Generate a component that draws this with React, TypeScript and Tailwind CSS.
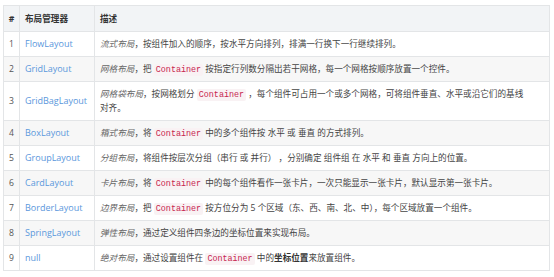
import React from "react";

const C = ({ children }: { children: React.ReactNode }) => (
  <code className="font-['Liberation_Mono',monospace] text-[8.4px] leading-[12px] text-[#c7254e] bg-[#f9f2f4] px-[2px] py-[1px] rounded-[2px]">
    {children}
  </code>
);

const E = ({ children }: { children: React.ReactNode }) => <em className="italic text-[#666]">{children}</em>;

const rows: { n: string; name: string; desc: React.ReactNode }[] = [
  { n: "1", name: "FlowLayout", desc: <><E>流式布局</E>，按组件加入的顺序，按水平方向排列，排满一行换下一行继续排列。</> },
  { n: "2", name: "GridLayout", desc: <><E>网格布局</E>，把 <C>Container</C> 按指定行列数分隔出若干网格，每一个网格按顺序放置一个控件。</> },
  { n: "3", name: "GridBagLayout", desc: <><E>网格袋布局</E>，按网格划分 <C>Container</C> ，每个组件可占用一个或多个网格，可将组件垂直、水平或沿它们的基线<br />对齐。</> },
  { n: "4", name: "BoxLayout", desc: <><E>箱式布局</E>，将 <C>Container</C> 中的多个组件按 水平 或 垂直 的方式排列。</> },
  { n: "5", name: "GroupLayout", desc: <><E>分组布局</E>，将组件按层次分组（串行 或 并行） ，分别确定 组件组 在 水平 和 垂直 方向上的位置。</> },
  { n: "6", name: "CardLayout", desc: <><E>卡片布局</E>，将 <C>Container</C> 中的每个组件看作一张卡片，一次只能显示一张卡片，默认显示第一张卡片。</> },
  { n: "7", name: "BorderLayout", desc: <><E>边界布局</E>，把 <C>Container</C> 按方位分为 5 个区域（东、西、南、北、中），每个区域放置一个组件。</> },
  { n: "8", name: "SpringLayout", desc: <><E>弹性布局</E>，通过定义组件四条边的坐标位置来实现布局。</> },
  { n: "9", name: "null", desc: <><E>绝对布局</E>，通过设置组件在 <C>Container</C> 中的<strong className="font-bold text-[#333]">坐标位置</strong>来放置组件。</> },
];

export default function App() {
  return (
    <div className="w-[554px] h-[277px] bg-white pt-[5px] pl-[3px] font-['Open_Sans','Noto_Sans_CJK_SC',sans-serif] text-[8.6px] leading-[14px] text-[#444]">
      <table className="w-[546px] border-collapse table-fixed">
        <colgroup>
          <col className="w-[16px]" />
          <col className="w-[75px]" />
          <col className="w-[455px]" />
        </colgroup>
        <thead>
          <tr className="bg-[#f2f4f6]">
            <th className="border border-[#e3e5e7] text-center font-bold text-[#333] py-0 px-0 h-[26px]">#</th>
            <th className="border border-[#e3e5e7] text-left font-bold text-[#333] py-0 px-[5px]">布局管理器</th>
            <th className="border border-[#e3e5e7] text-left font-bold text-[#333] py-0 px-[5px]">描述</th>
          </tr>
        </thead>
        <tbody>
          {rows.map((r, i) => (
            <tr key={r.n} className={i % 2 === 1 ? "bg-[#f7f7f7]" : "bg-white"}>
              <td className="border border-[#e3e5e7] text-center text-[#555] py-0 px-0 h-[25px]">{r.n}</td>
              <td className="border border-[#e3e5e7] px-[5px] py-0 text-[9px] text-[#5a97dc] whitespace-nowrap">{r.name}</td>
              <td className="border border-[#e3e5e7] px-[5px] py-[5px] whitespace-nowrap">{r.desc}</td>
            </tr>
          ))}
        </tbody>
      </table>
    </div>
  );
}
